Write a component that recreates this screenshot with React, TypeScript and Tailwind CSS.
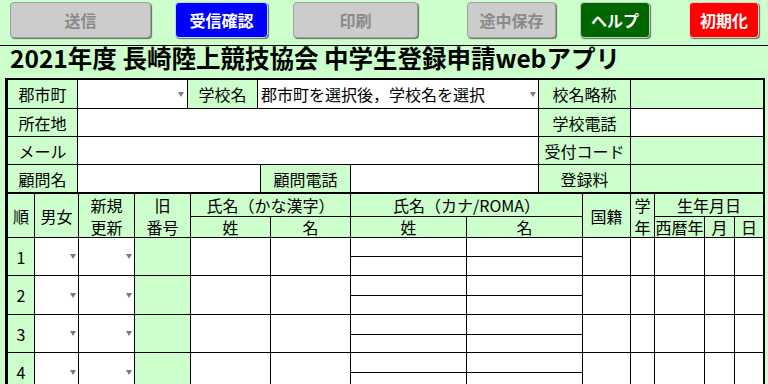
import React from 'react';

const COLS =
  'grid grid-cols-[27px_44px_56px_56px_80px_80px_116px_116px_48px_24px_50px_30px_28px]';

const Arrow = () => (
  <svg width="6" height="5" viewBox="0 0 6 5" className="shrink-0">
    <path d="M0 0H6L3 5Z" fill="#7a7a7a" />
  </svg>
);

function Btn({ label, cls }: { label: string; cls: string }) {
  return (
    <div
      className={
        'flex h-[36px] items-center justify-center rounded-[4px] text-[16px] font-bold shadow-[1px_1px_1px_rgba(0,0,0,0.55)] ' +
        cls
      }
    >
      {label}
    </div>
  );
}

function DataRow({ n, rows }: { n: number; rows: string }) {
  const c = 'border-r border-b border-black';
  return (
    <div className={COLS + ' ' + rows}>
      <div className={'row-span-2 flex items-center justify-center ' + c}>{n}</div>
      <div className={'row-span-2 flex items-center justify-end bg-white pr-[2px] ' + c}>
        <Arrow />
      </div>
      <div className={'row-span-2 flex items-center justify-end bg-white pr-[2px] ' + c}>
        <Arrow />
      </div>
      <div className={'row-span-2 ' + c} />
      <div className={'row-span-2 bg-white ' + c} />
      <div className={'row-span-2 bg-white ' + c} />
      <div className={'col-start-7 row-start-1 bg-white ' + c} />
      <div className={'col-start-8 row-start-1 bg-white ' + c} />
      <div className={'row-span-2 bg-white ' + c} />
      <div className={'row-span-2 bg-white ' + c} />
      <div className={'row-span-2 bg-white ' + c} />
      <div className={'row-span-2 bg-white ' + c} />
      <div className="row-span-2 border-b border-black bg-white" />
      <div className={'col-start-7 row-start-2 bg-white ' + c} />
      <div className={'col-start-8 row-start-2 bg-white ' + c} />
    </div>
  );
}

export default function App() {
  const lab = 'flex items-center justify-center border-r border-black whitespace-nowrap';
  const hc = 'flex items-center justify-center border-r border-b border-black whitespace-nowrap';
  return (
    <div className="h-[384px] w-[768px] overflow-hidden bg-[#ccffcc] font-['Noto_Sans_CJK_JP',sans-serif] text-[16px] text-black">
      {/* button bar */}
      <div className="flex h-[46px] items-start border-b border-black pt-[2px]">
        <div className="ml-[10px] w-[141px]">
          <Btn label="送信" cls="border border-[#a0a0a0] bg-[#cccccc] text-[#8a8a8a]" />
        </div>
        <div className="ml-[24px] w-[93px]">
          <Btn label="受信確認" cls="border border-[#d0d0ff] bg-[#0000ff] text-white" />
        </div>
        <div className="ml-[25px] w-[125px]">
          <Btn label="印刷" cls="border border-[#a0a0a0] bg-[#cccccc] text-[#8a8a8a]" />
        </div>
        <div className="ml-[49px] w-[89px]">
          <Btn label="途中保存" cls="border border-[#a0a0a0] bg-[#cccccc] text-[#8a8a8a]" />
        </div>
        <div className="ml-[24px] w-[70px]">
          <Btn label="ヘルプ" cls="border border-[#c0d0c0] bg-[#006600] text-white" />
        </div>
        <div className="ml-[39px] w-[70px]">
          <Btn label="初期化" cls="border border-[#ffd0d0] bg-[#ff0000] text-white" />
        </div>
      </div>

      {/* title */}
      <div className="h-[32px] pl-[10px] text-[24.5px] font-bold leading-[24px] whitespace-nowrap">
        2021年度 長崎陸上競技協会 中学生登録申請webアプリ
      </div>

      {/* form table */}
      <div className="ml-[5px] w-[760px] border-t-2 border-r-2 border-l-[3px] border-black">
        <div className="flex h-[29px] border-b border-black">
          <div className={'w-[70px] ' + lab}>郡市町</div>
          <div className="flex w-[110px] items-center justify-end border-r border-black bg-white pr-[3px]">
            <Arrow />
          </div>
          <div className={'w-[70px] ' + lab}>学校名</div>
          <div className="flex w-[281px] items-center justify-between border-r border-black bg-white pr-[2px] pl-[3px] whitespace-nowrap">
            <span>郡市町を選択後，学校名を選択</span>
            <Arrow />
          </div>
          <div className={'w-[92px] ' + lab}>校名略称</div>
          <div className="w-[132px]" />
        </div>
        <div className="flex h-[28px] border-b border-black">
          <div className={'w-[70px] ' + lab}>所在地</div>
          <div className="w-[461px] border-r border-black bg-white" />
          <div className={'w-[92px] ' + lab}>学校電話</div>
          <div className="w-[132px] bg-white" />
        </div>
        <div className="flex h-[28px] border-b border-black">
          <div className={'w-[70px] ' + lab}>メール</div>
          <div className="w-[461px] border-r border-black bg-white" />
          <div className={'w-[92px] ' + lab}>受付コード</div>
          <div className="w-[132px]" />
        </div>
        <div className="flex h-[29px] border-b-2 border-black">
          <div className={'w-[70px] ' + lab}>顧問名</div>
          <div className="w-[183px] border-r border-black bg-white" />
          <div className={'w-[90px] ' + lab}>顧問電話</div>
          <div className="w-[188px] border-r border-black bg-white" />
          <div className={'w-[92px] ' + lab}>登録料</div>
          <div className="w-[132px]" />
        </div>

        {/* header */}
        <div className={COLS + ' grid-rows-[23px_21px]'}>
          <div className={'row-span-2 ' + hc}>順</div>
          <div className={'row-span-2 ' + hc}>男女</div>
          <div className={'row-span-2 flex-col leading-[22px] ' + hc}>
            <span>新規</span>
            <span>更新</span>
          </div>
          <div className={'row-span-2 flex-col leading-[22px] ' + hc}>
            <span>旧</span>
            <span>番号</span>
          </div>
          <div className={'col-span-2 ' + hc}>氏名（かな漢字）</div>
          <div className={'col-span-2 ' + hc}>氏名（カナ/ROMA）</div>
          <div className={'row-span-2 ' + hc}>国籍</div>
          <div className={'row-span-2 flex-col leading-[22px] ' + hc}>
            <span>学</span>
            <span>年</span>
          </div>
          <div className="col-span-3 flex items-center justify-center border-b border-black">生年月日</div>
          <div className={hc}>姓</div>
          <div className={hc}>名</div>
          <div className={hc}>姓</div>
          <div className={hc}>名</div>
          <div className={hc}>西暦年</div>
          <div className={hc}>月</div>
          <div className="flex items-center justify-center border-b border-black">日</div>
        </div>

        <DataRow n={1} rows="grid-rows-[19px_19px]" />
        <DataRow n={2} rows="grid-rows-[20px_19px]" />
        <DataRow n={3} rows="grid-rows-[20px_18px]" />
        <DataRow n={4} rows="grid-rows-[20px_19px]" />
      </div>
    </div>
  );
}
